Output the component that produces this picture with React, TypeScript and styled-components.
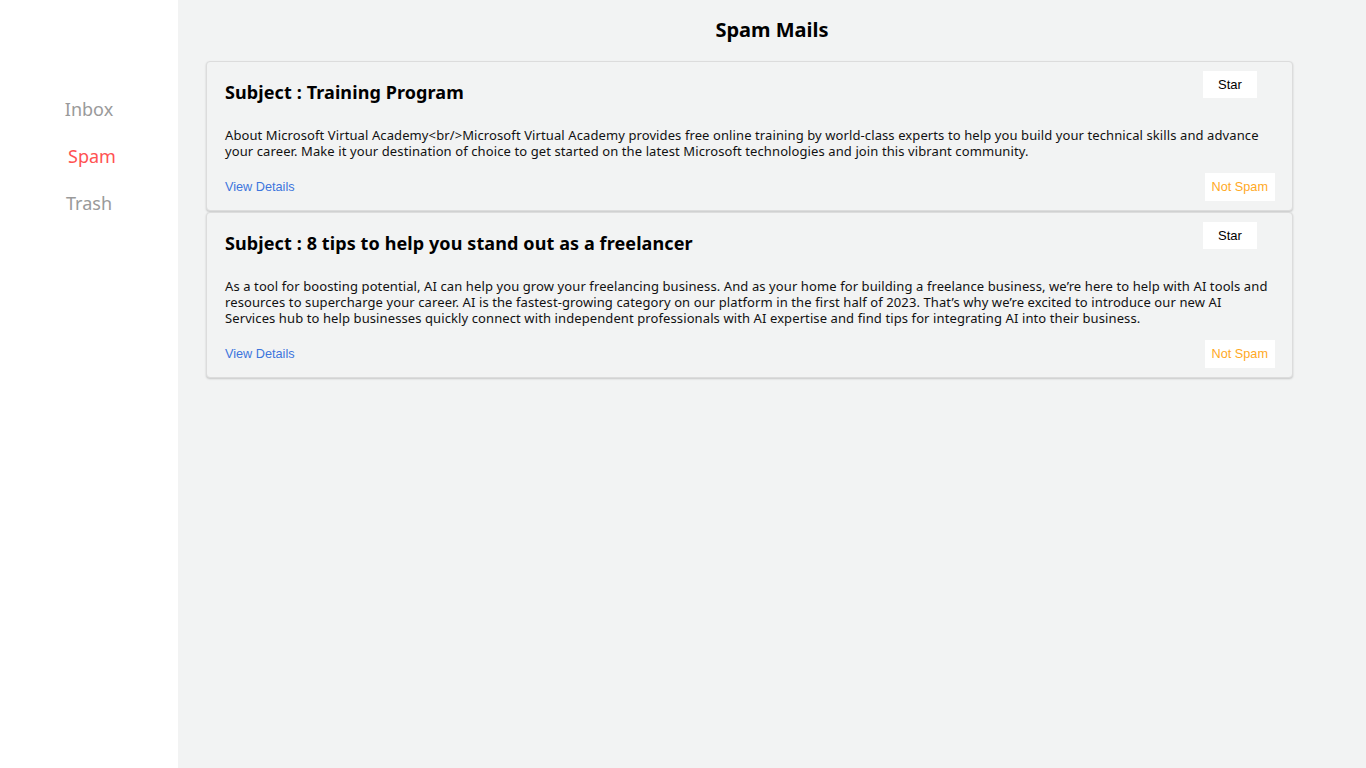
import React from "react";
import styled, { createGlobalStyle } from "styled-components";

const GlobalStyle = createGlobalStyle`
  html, body {
    margin: 0;
    padding: 0;
    background: #f2f3f3;
  }
  body {
    font-family: "Noto Sans", "Open Sans", sans-serif;
  }
`;

const mails = [
  {
    id: 1,
    subject: "Training Program",
    body:
      "About Microsoft Virtual Academy<br/>Microsoft Virtual Academy provides free online training by world-class experts to help you build your technical skills and advance your career. Make it your destination of choice to get started on the latest Microsoft technologies and join this vibrant community.",
  },
  {
    id: 2,
    subject: "8 tips to help you stand out as a freelancer",
    body:
      "As a tool for boosting potential, AI can help you grow your freelancing business. And as your home for building a freelance business, we\u2019re here to help with AI tools and resources to supercharge your career. AI is the fastest-growing category on our platform in the first half of 2023. That\u2019s why we\u2019re excited to introduce our new AI Services hub to help businesses quickly connect with independent professionals with AI expertise and find tips for integrating AI into their business.",
  },
];

function App() {
  return (
    <Page>
      <GlobalStyle />
      <Sidebar>
        <NavItem>Inbox</NavItem>
        <NavItem active>Spam</NavItem>
        <NavItem>Trash</NavItem>
      </Sidebar>
      <Main>
        <Title>Spam Mails</Title>
        <List>
          {mails.map((mail) => (
            <Card key={mail.id}>
              <StarButton>Star</StarButton>
              <Subject>Subject : {mail.subject}</Subject>
              <Body>{mail.body}</Body>
              <Footer>
                <DetailsLink href="#">View Details</DetailsLink>
                <NotSpamButton>Not Spam</NotSpamButton>
              </Footer>
            </Card>
          ))}
        </List>
      </Main>
    </Page>
  );
}

const Page = styled.div`
  display: flex;
  min-height: 100vh;
`;

const Sidebar = styled.nav`
  width: 178px;
  flex-shrink: 0;
  background: #fff;
  display: flex;
  flex-direction: column;
  align-items: center;
  padding-top: 96px;
  gap: 21px;
`;

const NavItem = styled.div<{ active?: boolean }>`
  font-size: 18px;
  line-height: 26px;
  color: ${(p) => (p.active ? "#ff5252" : "#9a9a9a")};
  margin-left: ${(p) => (p.active ? "6px" : "0")};
  cursor: pointer;
`;

const Main = styled.main`
  flex: 1;
  background: #f2f3f3;
`;

const Title = styled.h2`
  margin: 16px 0 17px;
  text-align: center;
  font-size: 20px;
  line-height: 28px;
  font-weight: 700;
  color: #000;
`;

const List = styled.div`
  display: flex;
  flex-direction: column;
  gap: 1px;
  margin: 0 73px 0 28px;
`;

const Card = styled.div`
  position: relative;
  background: #f2f3f3;
  border: 1px solid #dcdcdc;
  border-radius: 4px;
  box-shadow: 0 1px 2px rgba(0, 0, 0, 0.18);
  padding: 17px 18px 9px;
`;

const StarButton = styled.button`
  position: absolute;
  top: 9px;
  right: 35px;
  width: 54px;
  height: 27px;
  border: none;
  background: #fff;
  font-family: "Liberation Sans", Arial, sans-serif;
  font-size: 13px;
  color: #000;
  cursor: pointer;
`;

const Subject = styled.h3`
  margin: 0;
  font-size: 18px;
  line-height: 26px;
  font-weight: 700;
  letter-spacing: 0.1px;
  color: #000;
`;

const Body = styled.p`
  margin: 22px 0 0;
  font-size: 13px;
  line-height: 16px;
  letter-spacing: 0.1px;
  color: #111;
`;

const Footer = styled.div`
  display: flex;
  justify-content: space-between;
  align-items: center;
  margin-top: 14px;
`;

const DetailsLink = styled.a`
  font-family: "Liberation Sans", Arial, sans-serif;
  font-size: 12.7px;
  color: #3d75dd;
  text-decoration: none;
`;

const NotSpamButton = styled.button`
  height: 28px;
  padding: 0 7px;
  margin-right: -1px;
  border: none;
  background: #fff;
  font-family: "Liberation Sans", Arial, sans-serif;
  font-size: 12.7px;
  color: #ffa91f;
  cursor: pointer;
`;

export default App;
